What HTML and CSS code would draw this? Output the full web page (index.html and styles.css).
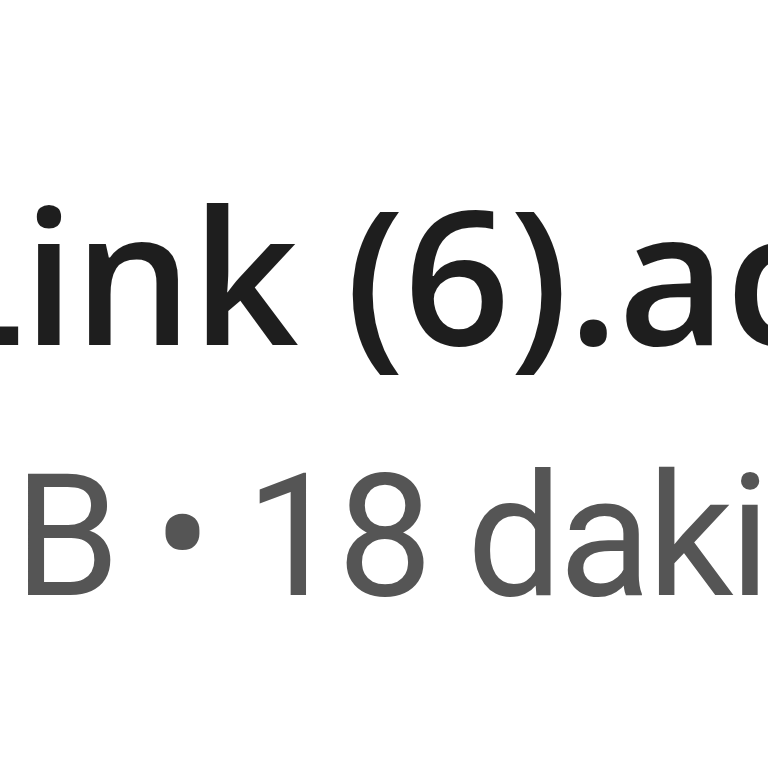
FILE: index.html
```html
<!DOCTYPE html>
<html>
<head>
<meta charset="utf-8">
<link rel="stylesheet" href="styles.css">
</head>
<body>
<div class="item">
  <div class="name">Link (6).acsm</div>
  <div class="meta">B • 18 dakika önce</div>
</div>
</body>
</html>
```
FILE: styles.css
```css
html, body {
  margin: 0;
  padding: 0;
  background: #ffffff;
  width: 768px;
  height: 768px;
  overflow: hidden;
}
.item {
  padding-top: 179px;
  display: flex;
  flex-direction: column;
  white-space: nowrap;
}
.name {
  font-family: "Open Sans", "Noto Sans", sans-serif;
  font-size: 187px;
  line-height: 187px;
  font-weight: 600;
  color: #1e1e1e;
  margin-left: -78px;
  letter-spacing: -1px;
  margin-bottom: 86px;
}
.meta {
  font-family: Roboto, "Open Sans", sans-serif;
  font-size: 170px;
  line-height: 170px;
  font-weight: 400;
  color: #555555;
  margin-left: 14px;
  letter-spacing: -4px;
}
```
